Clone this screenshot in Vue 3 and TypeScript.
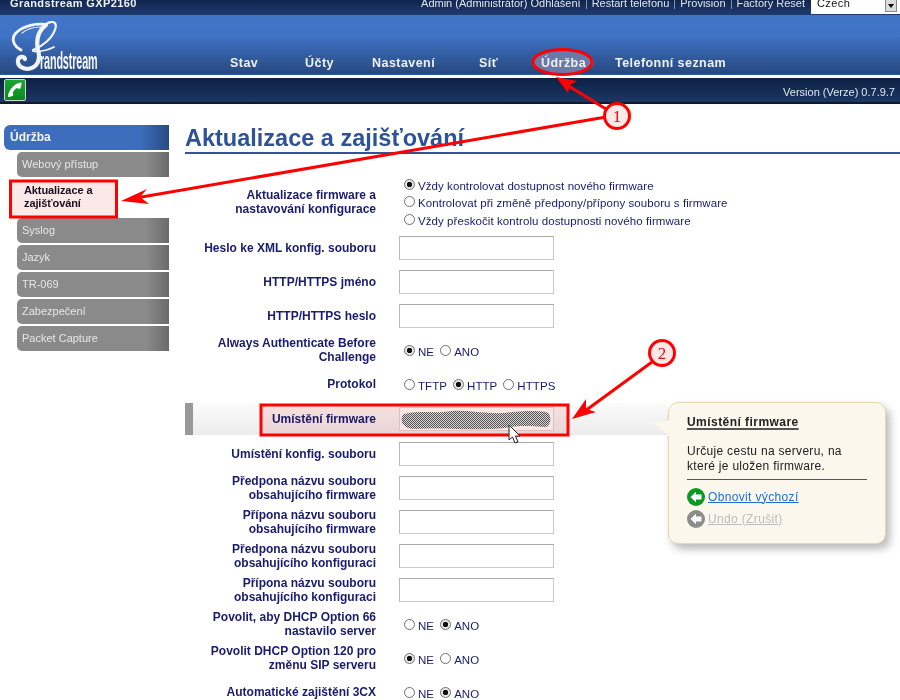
<script setup lang="ts">
const topLinks = ['Restart telefonu', 'Provision', 'Factory Reset']
const nav = [
  { label: 'Stav', cls: 'n1' },
  { label: 'Účty', cls: 'n2' },
  { label: 'Nastavení', cls: 'n3' },
  { label: 'Síť', cls: 'n4' },
  { label: 'Údržba', cls: 'n5 on' },
  { label: 'Telefonní seznam', cls: 'n6' },
]
const side = ['Syslog', 'Jazyk', 'TR-069', 'Zabezpečení', 'Packet Capture']
type Row = { label: string[]; kind: 'input' | 'radio'; opts?: string[]; sel?: number }
const rowsA: Row[] = [
  { label: ['Heslo ke XML konfig. souboru'], kind: 'input' },
  { label: ['HTTP/HTTPS jméno'], kind: 'input' },
  { label: ['HTTP/HTTPS heslo'], kind: 'input' },
  { label: ['Always Authenticate Before', 'Challenge'], kind: 'radio', opts: ['NE', 'ANO'], sel: 0 },
  { label: ['Protokol'], kind: 'radio', opts: ['TFTP', 'HTTP', 'HTTPS'], sel: 1 },
]
const rowsB: Row[] = [
  { label: ['Umístění konfig. souboru'], kind: 'input' },
  { label: ['Předpona názvu souboru', 'obsahujícího firmware'], kind: 'input' },
  { label: ['Přípona názvu souboru', 'obsahujícího firmware'], kind: 'input' },
  { label: ['Předpona názvu souboru', 'obsahujícího konfiguraci'], kind: 'input' },
  { label: ['Přípona názvu souboru', 'obsahujícího konfiguraci'], kind: 'input' },
  { label: ['Povolit, aby DHCP Option 66', 'nastavilo server'], kind: 'radio', opts: ['NE', 'ANO'], sel: 1 },
  { label: ['Povolit DHCP Option 120 pro', 'změnu SIP serveru'], kind: 'radio', opts: ['NE', 'ANO'], sel: 0 },
  { label: ['Automatické zajištění 3CX'], kind: 'radio', opts: ['NE', 'ANO'], sel: 1 },
]
const firmwareOpts = [
  'Vždy kontrolovat dostupnost nového firmware',
  'Kontrolovat při změně předpony/přípony souboru s firmware',
  'Vždy přeskočit kontrolu dostupnosti nového firmware',
]
</script>

<template>
  <div class="page">
    <header class="top">
      <span class="brand">Grandstream GXP2160</span>
      <div class="top-right">
        <span class="tl">Admin (Administrátor) Odhlášení</span>
        <template v-for="l in topLinks" :key="l">
          <i class="sep"></i><span class="tl">{{ l }}</span>
        </template>
        <div class="lang"><span>Czech</span><b class="lang-btn"><svg width="6" height="4" viewBox="0 0 6 4"><path d="M0 0h6L3 4z" fill="#000"/></svg></b></div>
      </div>
    </header>
    <div class="band">
      <div class="logo">
        <svg class="swash" width="60" height="52" viewBox="11 21 60 52" fill="none" stroke="#f2f4f8" stroke-linecap="round">
          <path d="M46 24.500C36 23 24 26 17 32 11 37 12 45 21 50" stroke-width="2.800"/>
          <path d="M46 25C38 31 36 40 38 50 41 60 37 67 30 68.500 23 70 17 66 18 60 19 56 24 56 25 59" stroke-width="4.200"/>
          <path d="M45 25C51 20 57 21 55.500 28 53 38 43 46 33 50" stroke-width="2.200"/>
          <path d="M33 51C40 52 48 50 54 47" stroke-width="1.800"/>
          <path d="M22 33C27 29 34 27 41 27" stroke-width="1.200"/>
        </svg>
        <span class="logo-text">randstream</span>
      </div>
      <nav class="nav">
        <span v-for="n in nav" :key="n.label" :class="['nav-item', n.cls]">{{ n.label }}</span>
      </nav>
    </div>
    <div class="statusbar">
      <span class="phone">
        <svg width="20" height="20" viewBox="0 0 20 20"><path d="M15.500 2.500c-6 1.200-11 6.500-12.500 13 -.2 1 .4 1.700 1.300 1.500l3-.9c.8-.2 1.100-.8.9-1.500l-.5-1.800c.8-2 2.400-3.700 4.500-4.700l1.700.6c.8.200 1.400 0 1.600-.8l1-3.900c.2-.9-.3-1.600-1-1.500z" fill="#fff"/></svg>
      </span>
      <span class="ver">Version (Verze) 0.7.9.7</span>
    </div>
    <div class="main">
      <aside class="side">
        <div class="side-head">Údržba</div>
        <div class="side-item">Webový přístup</div>
        <div class="side-current">Aktualizace a<br />zajišťování</div>
        <div v-for="s in side" :key="s" class="side-item">{{ s }}</div>
      </aside>
      <section class="content">
        <h1 class="title">Aktualizace a zajišťování</h1>
        <div class="form">
          <div class="row row-first">
            <div class="lab lab-first">Aktualizace firmware a<br />nastavování konfigurace</div>
            <div class="stack">
              <label v-for="(o, i) in firmwareOpts" :key="o" class="opt">
                <span :class="['radio', { sel: i === 0 }]"></span>{{ o }}
              </label>
            </div>
          </div>
          <div v-for="r in rowsA" :key="r.label[0]" class="row">
            <div class="lab"><template v-for="(t, i) in r.label" :key="t"><br v-if="i" />{{ t }}</template></div>
            <div v-if="r.kind === 'input'" class="field"></div>
            <div v-else class="radios">
              <label v-for="(o, i) in r.opts" :key="o" class="opt"><span :class="['radio', { sel: i === r.sel }]"></span>{{ o }}</label>
            </div>
          </div>
          <div class="row row-hi">
            <div class="lab">Umístění firmware</div>
            <div class="field field-hi"></div>
          </div>
          <div v-for="r in rowsB" :key="r.label[0] + r.label[1]" class="row">
            <div class="lab"><template v-for="(t, i) in r.label" :key="t"><br v-if="i" />{{ t }}</template></div>
            <div v-if="r.kind === 'input'" class="field"></div>
            <div v-else class="radios">
              <label v-for="(o, i) in r.opts" :key="o" class="opt"><span :class="['radio', { sel: i === r.sel }]"></span>{{ o }}</label>
            </div>
          </div>
        </div>
      </section>
    </div>

    <aside class="tip">
      <span class="tip-tail"></span>
      <div class="tip-title">Umístění firmware</div>
      <p class="tip-text">Určuje cestu na serveru, na<br />které je uložen firmware.</p>
      <div class="tip-links">
        <div class="tip-link"><span class="round green"><svg width="14" height="14" viewBox="0 0 14 14"><path d="M1.500 7L7 1.800V4.600H12.500V9.400H7V12.200z" fill="#fff"/></svg></span><span class="a">Obnovit výchozí</span></div>
        <div class="tip-link"><span class="round grey"><svg width="14" height="14" viewBox="0 0 14 14"><path d="M1.500 7L7 1.800V4.600H12.500V9.400H7V12.200z" fill="#fff"/></svg></span><span class="a off">Undo (Zrušit)</span></div>
      </div>
    </aside>

    <svg class="marks tints" width="900" height="700" viewBox="0 0 900 700">
      <rect x="10" y="180" width="107" height="37" fill="#fbe8e8"/>
      <rect x="260" y="404" width="309" height="32" fill="#fbe6e6"/>
    </svg>
    <svg class="marks" width="900" height="700" viewBox="0 0 900 700">
      <defs>
        <pattern id="dither" width="2" height="2" patternUnits="userSpaceOnUse">
          <rect width="2" height="2" fill="#d8d4d4"/>
          <rect width="1" height="1" fill="#555"/>
          <rect x="1" y="1" width="1" height="1" fill="#555"/>
        </pattern>
      </defs>
      <rect x="10.500" y="181" width="106" height="36" fill="none" stroke="#f00" stroke-width="3"/>
      <rect x="261" y="405" width="307" height="30" fill="none" stroke="#f00" stroke-width="3"/>
      <path d="M404 414C420 410 436 414 452 411 468 410 486 414 505 413 520 411 535 410 546 412 552 414 552 424 546 427 530 426 520 425 505 428 480 431 440 427 415 429 401 429 399 418 404 414z" fill="url(#dither)"/>
      <ellipse cx="562.500" cy="62" rx="29.500" ry="12.500" fill="none" stroke="#f00" stroke-width="3"/>
      <g stroke="#f00" stroke-width="3" fill="none">
        <path d="M606 109L562 82"/>
        <path d="M606 117L130 199"/>
        <path d="M652 362L585 411"/>
      </g>
      <path d="M556 77L577 81 570 85 568 93z" fill="#f00"/>
      <path d="M121 201L147 189 140 197 149 204z" fill="#f00"/>
      <path d="M572 419L586 399 586 409 596 412z" fill="#f00"/>
      <g fill="#fde8e8" stroke="#f00" stroke-width="3">
        <circle cx="617" cy="116" r="12.500"/>
        <circle cx="662" cy="353" r="12.500"/>
      </g>
      <text x="617" y="122" class="num">1</text>
      <text x="662" y="359" class="num">2</text>
      <path d="M509 425V440L512.500 437 515 443 518 442 515.500 436 520 436z" fill="#fff" stroke="#222" stroke-width="1"/>
    </svg>
  </div>
</template>

<style>
html, body { margin: 0; overflow: hidden; background: #fff; }
</style>

<style scoped>
.page {
  position: relative;
  width: 900px;
  height: 700px;
  overflow: hidden;
  background: #fff;
  font-family: "Liberation Sans", Arial, sans-serif;
}
.top {
  height: 15px;
  display: flex;
  justify-content: space-between;
  background: linear-gradient(#10264d, #1f3b70);
  color: #eef1f6;
  font-size: 11px;
  line-height: 6px;
}
.brand { margin-left: 10px; font-weight: 700; letter-spacing: .4px; }
.top-right { display: flex; align-items: flex-start; }
.tl { color: #dfe5ee; }
.sep { width: 1px; height: 9px; background: #7f8fae; margin: 0 5px; }
.lang {
  width: 89px;
  height: 14px;
  margin-left: 6px;
  background: #fff;
  color: #111;
  display: flex;
  justify-content: space-between;
  padding-left: 6px;
  box-sizing: border-box;
  letter-spacing: .4px;
}
.lang-btn {
  width: 12px;
  height: 12px;
  margin-right: 3px;
  background: #dcdcdc;
  border: 1px solid #888;
  border-top: 0;
  box-sizing: border-box;
  display: flex;
  align-items: center;
  justify-content: center;
}
.band {
  height: 60px;
  display: flex;
  box-sizing: border-box;
  border-bottom: 1px solid #2f5ba5;
  background: linear-gradient(#4075c8 0%, #3f73c5 35%, #27487f 100%);
}
.logo { position: relative; width: 230px; flex: none; }
.swash { position: absolute; left: 11px; top: 6px; }
.logo-text {
  position: absolute;
  left: 40px;
  top: 33px;
  color: #f4f6f9;
  font-size: 24px;
  font-weight: 700;
  line-height: 26px;
  letter-spacing: -.3px;
  transform: scaleX(.45);
  transform-origin: left center;
}
.nav { position: relative; flex: 1; z-index: 0; }
.nav-item {
  position: absolute;
  top: 41px;
  color: #eef1f6;
  font-size: 12.500px;
  font-weight: 700;
  letter-spacing: .45px;
  line-height: 14px;
}
.n1 { left: 0; }
.n2 { left: 75px; }
.n3 { left: 142px; }
.n4 { left: 249px; }
.n5 { left: 311px; }
.n6 { left: 385px; }
.on::before {
  content: "";
  position: absolute;
  left: -8px;
  right: -8px;
  top: -5px;
  bottom: -4px;
  border-radius: 50%;
  background: #6b78a8;
  z-index: -1;
}
.statusbar {
  height: 26px;
  margin-top: 3px;
  box-sizing: border-box;
  display: flex;
  align-items: center;
  justify-content: space-between;
  padding: 0 5px 0 4px;
  background: linear-gradient(#0e2145, #1c3763);
  border-bottom: 2px solid #0d1a30;
}
.phone {
  width: 22px;
  height: 22px;
  box-sizing: border-box;
  border: 1px solid #c7d6c7;
  border-radius: 2px;
  background: linear-gradient(#1aa532, #0a8a1f);
  display: flex;
  align-items: center;
  justify-content: center;
}
.ver { color: #dfe5ee; font-size: 11px; position: relative; top: 2px; }
.main { display: flex; }
.side {
  width: 165px;
  margin-left: 4px;
  padding-top: 21px;
  flex: none;
}
.side-head {
  height: 25px;
  line-height: 24px;
  padding-left: 6px;
  border-radius: 6px 0 0 6px;
  background: linear-gradient(90deg, #3d6ebd 0%, #3d6ebd 82%, #2a4a83 100%);
  color: #f2f4f8;
  font-size: 12px;
  font-weight: 700;
}
.side-item {
  height: 25px;
  line-height: 24px;
  margin: 2px 0 0 13px;
  padding-left: 5px;
  border-radius: 5px 0 0 5px;
  background: linear-gradient(90deg, #8a8a8a 0%, #8a8a8a 85%, #6a6a6a 100%);
  color: #e7e7e7;
  font-size: 11px;
}
.side-current {
  height: 32px;
  margin-top: 2px;
  padding: 5px 0 0 20px;
  color: #1b1020;
  font-size: 11px;
  font-weight: 700;
  line-height: 13px;
  letter-spacing: -.1px;
}
.content { flex: 1; padding-left: 16px; min-width: 0; }
.title {
  margin: 21px 0 0;
  height: 27px;
  line-height: 27px;
  border-bottom: 2px solid #2f5597;
  color: #2d5296;
  font-size: 23.500px;
  font-weight: 700;
}
.form { padding-top: 20px; }
.row {
  display: grid;
  grid-template-columns: 191px 1fr;
  column-gap: 23px;
  align-items: center;
  min-height: 34px;
}
.row-first { min-height: 57px; }
.lab-first { padding-bottom: 2px; }
.row-hi {
  width: 483px;
  margin: 2px 0;
  min-height: 32px;
  box-sizing: border-box;
  background: linear-gradient(#fbfbfb, #ececec);
  border-left: 8px solid #999;
  grid-template-columns: 183px 1fr;
}
.lab {
  text-align: right;
  color: #1a1a6e;
  font-size: 12px;
  font-weight: 700;
  line-height: 14px;
}
.stack { display: flex; flex-direction: column; gap: 3.500px; padding-top: 1px; }
.radios { display: flex; gap: 1px; padding-top: 3px; }
.opt {
  display: flex;
  align-items: center;
  color: #1a1a6e;
  font-size: 11.500px;
  line-height: 14px;
  letter-spacing: .07px;
}
.radio {
  width: 11px;
  height: 11px;
  margin: -3px 3px 0 5px;
  flex: none;
  box-sizing: border-box;
  border: 1px solid #6f6f6f;
  border-radius: 50%;
  background: #fff;
}
.sel { background: radial-gradient(circle, #111 0 2.400px, #e8e8e8 3px); }
.field {
  width: 155px;
  height: 24px;
  box-sizing: border-box;
  background: #fff;
  border: 1px solid #c9c9c9;
  border-top-color: #a9a9a9;
  border-left-color: #b9b9b9;
}
.field-hi { height: 24px; border-color: #e2d4d4; }
.tip {
  position: absolute;
  left: 668px;
  top: 402px;
  width: 218px;
  height: 142px;
  box-sizing: border-box;
  padding: 12px 18px 0;
  background: #fcf7ec;
  border: 1px solid #e6d6b4;
  border-radius: 10px;
  box-shadow: 4px 5px 8px rgba(0, 0, 0, .28);
  color: #222;
  font-size: 12px;
  line-height: 15px;
  letter-spacing: .3px;
}
.tip-tail {
  position: absolute;
  left: -15px;
  top: 17px;
  width: 16px;
  height: 17px;
  background: #fcf7ec;
  clip-path: polygon(100% 0, 0 18%, 100% 100%);
}
.tip-title {
  font-weight: 700;
  letter-spacing: .45px;
  text-decoration: underline 2px #555;
  text-underline-offset: 2px;
  color: #222;
}
.tip-text { margin: 14px 0 0; }
.tip-links {
  margin-top: 5px;
  padding-top: 6px;
  border-top: 1px solid #555;
}
.tip-link { display: flex; align-items: center; height: 22px; letter-spacing: .35px; }
.round {
  width: 18px;
  height: 18px;
  margin-right: 3px;
  border-radius: 50%;
  display: flex;
  align-items: center;
  justify-content: center;
}
.green { background: #0a9a22; }
.grey { background: #8c8c8c; }
.a { color: #1f6fd0; text-decoration: underline; }
.off { color: #bdbdbd; }
.marks { position: absolute; left: 0; top: 0; pointer-events: none; }
.tints { mix-blend-mode: multiply; }
.num {
  fill: #e01010;
  font-family: "Liberation Serif", serif;
  font-size: 17px;
  text-anchor: middle;
}
</style>
